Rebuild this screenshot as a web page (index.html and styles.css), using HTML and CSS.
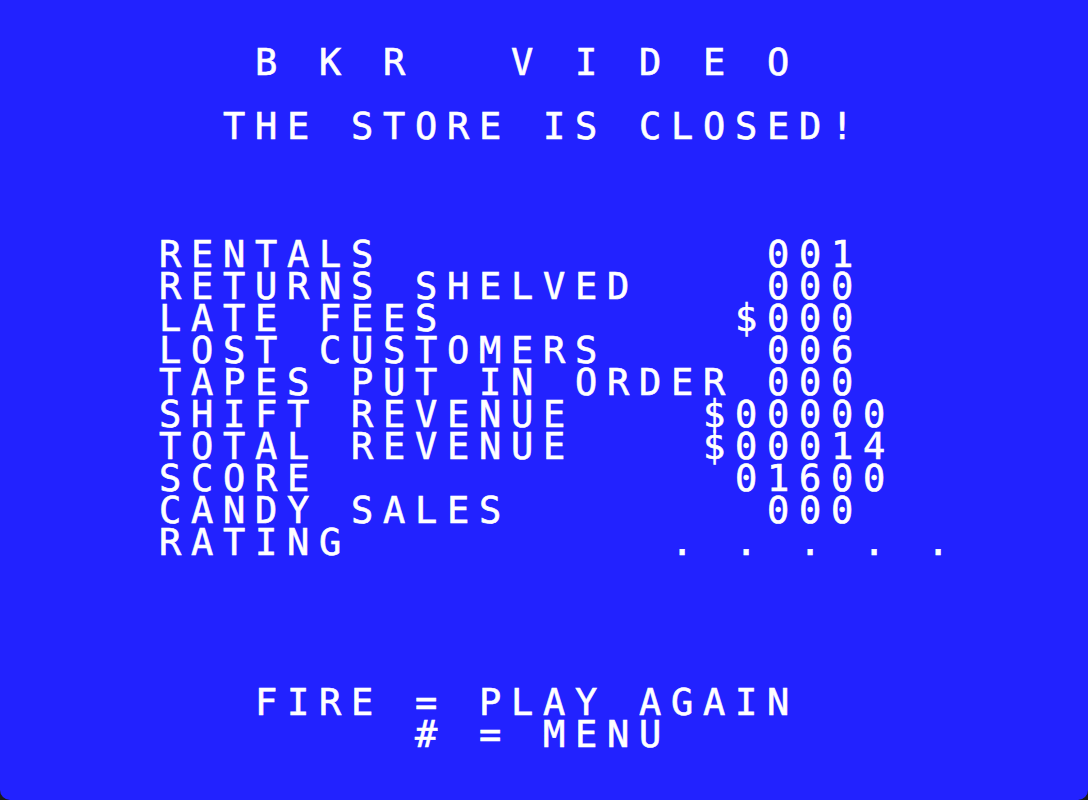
FILE: index.html
```html
<!DOCTYPE html>
<html>
<head>
<meta charset="utf-8">
<title>BKR Video</title>
<link rel="stylesheet" href="styles.css">
</head>
<body>
<main class="screen">
<pre class="text">       B K R   V I D E O

      THE STORE IS CLOSED!



    RENTALS            001
    RETURNS SHELVED    000
    LATE FEES         $000
    LOST CUSTOMERS     006
    TAPES PUT IN ORDER 000
    SHIFT REVENUE    $00000
    TOTAL REVENUE    $00014
    SCORE             01600
    CANDY SALES        000
    RATING          . . . . .




       FIRE = PLAY AGAIN
            # = MENU</pre>
</main>
</body>
</html>
```
FILE: styles.css
```css
html {
  background: #1a1a1a;
}
body {
  margin: 0;
}
.screen {
  width: 1088px;
  height: 800px;
  background: #2222ff;
  border-radius: 0 0 10px 10px;
  overflow: hidden;
  box-sizing: border-box;
  padding: 47px 0 0 31px;
}
.text {
  margin: 0;
  color: #ffffff;
  font-family: "DejaVu Sans Mono", monospace;
  font-size: 37px;
  line-height: 32px;
  letter-spacing: calc(32px - 0.60205em);
  -webkit-text-stroke: 0.6px #ffffff;
  white-space: pre;
}
```
